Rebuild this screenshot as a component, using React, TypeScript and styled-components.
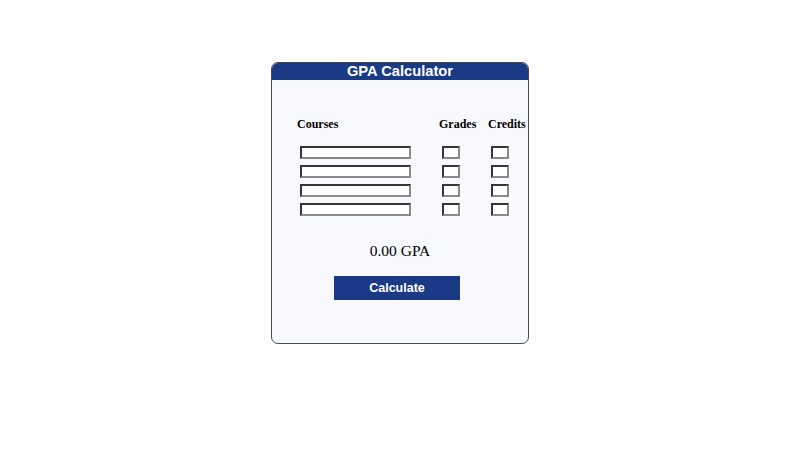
import React from "react";
import styled, { createGlobalStyle } from "styled-components";

const Global = createGlobalStyle`
  html, body { margin: 0; padding: 0; background: #ffffff; }
  body { font-family: "Liberation Serif", "Times New Roman", serif; }
`;

const Card = styled.div`
  width: 258px;
  box-sizing: border-box;
  margin: 62px auto 0;
  border: 1px solid #4a4a4a;
  border-radius: 7px;
  background: #f8f9fd;
  overflow: hidden;
  padding-bottom: 43px;
`;

const Header = styled.h1`
  margin: 0;
  height: 17px;
  background: #1b3a86;
  color: #ffffff;
  font-family: "Liberation Sans", Arial, sans-serif;
  font-weight: bold;
  font-size: 14.7px;
  line-height: 17px;
  text-align: center;
`;

const Grid = styled.div`
  display: grid;
  grid-template-columns: 142px 49px 1fr;
  row-gap: 6px;
  padding: 37px 0 0 25px;
`;

const Label = styled.div`
  font-weight: bold;
  font-size: 12px;
  line-height: 14px;
  color: #000;
  margin-bottom: 9px;
  white-space: nowrap;
`;

const Field = styled.input<{ $w: number }>`
  display: block;
  box-sizing: border-box;
  width: ${(p) => p.$w}px;
  height: 13px;
  margin: 0 0 0 3px;
  padding: 0;
  border: 2px inset #8a8a8a;
  background: #fff;
  font-size: 9px;
`;

const Result = styled.div`
  margin-top: 26px;
  text-align: center;
  font-size: 15.5px;
  line-height: 18px;
  color: #000;
`;

const Button = styled.button`
  display: block;
  margin: 16px auto 0;
  position: relative;
  left: -3px;
  width: 126px;
  height: 24px;
  border: none;
  background: #1b3a86;
  color: #fff;
  font-family: "Liberation Sans", Arial, sans-serif;
  font-weight: bold;
  font-size: 12.5px;
  cursor: pointer;
`;

export default function App() {
  const rows = [0, 1, 2, 3];
  return (
    <>
      <Global />
      <Card>
        <Header>GPA Calculator</Header>
        <Grid>
          <Label>Courses</Label>
          <Label>Grades</Label>
          <Label>Credits</Label>
          {rows.map((r) => (
            <React.Fragment key={r}>
              <Field $w={111} type="text" />
              <Field $w={18} type="text" />
              <Field $w={18} type="text" />
            </React.Fragment>
          ))}
        </Grid>
        <Result>0.00 GPA</Result>
        <Button>Calculate</Button>
      </Card>
    </>
  );
}
